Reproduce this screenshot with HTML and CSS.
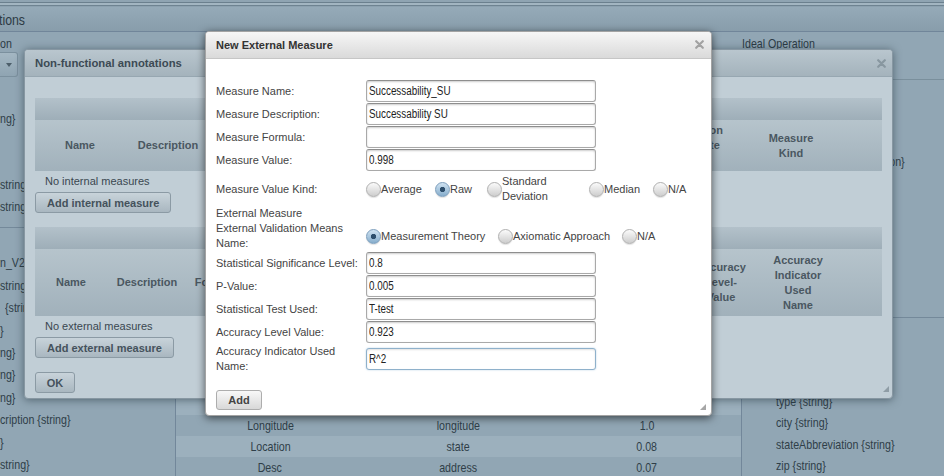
FILE: index.html
```html
<!DOCTYPE html>
<html>
<head>
<meta charset="utf-8">
<title>New External Measure</title>
<link rel="stylesheet" href="styles.css">
</head>
<body>
<div class="page">
  <div class="topstrip"></div>
  <div class="appbar"><span class="cx">tions</span></div>
  <div class="colhead left-head">
    <div class="head-label"><span class="cx">on</span></div>
    <div class="dropdown"><span class="caret"></span></div>
  </div>
  <div class="colhead mid-head"></div>
  <div class="colhead right-head"><div class="head-label"><span class="cx">Ideal Operation</span></div></div>

  <div class="leftcol">
    <ul class="group g1">
      <li></li><li><span class="cx">ng}</span></li><li></li><li></li><li><span class="cx">string}</span></li><li><span class="cx">string}</span></li>
    </ul>
    <ul class="group g2">
      <li></li>
      <li><span class="cx">n_V2</span></li>
      <li><span class="cx">string}</span></li>
      <li class="ind"><span class="cx">{string}</span></li>
      <li><span class="cx">}</span></li>
      <li><span class="cx">ng}</span></li>
      <li><span class="cx">ng}</span></li>
      <li><span class="cx">ng}</span></li>
      <li><span class="cx">cription {string}</span></li>
      <li><span class="cx">}</span></li>
      <li><span class="cx">string}</span></li>
    </ul>
  </div>

  <div class="midcol">
    <div class="trow"></div><div class="trow"></div><div class="trow"></div><div class="trow"></div>
    <div class="trow"></div><div class="trow"></div><div class="trow"></div><div class="trow"></div>
    <div class="trow"></div><div class="trow"></div><div class="trow"></div><div class="trow"></div>
    <div class="trow"></div><div class="trow"></div><div class="trow"></div>
    <div class="trow"><span class="cc">Longitude</span><span class="cc">longitude</span><span class="cc">1.0</span></div>
    <div class="trow"><span class="cc">Location</span><span class="cc">state</span><span class="cc">0.08</span></div>
    <div class="trow"><span class="cc">Desc</span><span class="cc">address</span><span class="cc">0.07</span></div>
  </div>

  <div class="rightcol">
    <ul class="group g1">
      <li></li><li></li><li></li><li><span class="cx">geoLocation {GeoLocation}</span></li><li></li><li></li><li></li><li></li><li></li><li></li>
    </ul>
    <ul class="group g2">
      <li></li><li></li><li></li>
      <li><span class="cx">type {string}</span></li>
      <li><span class="cx">city {string}</span></li>
      <li><span class="cx">stateAbbreviation {string}</span></li>
      <li><span class="cx">zip {string}</span></li>
    </ul>
  </div>
</div>

<div class="dialog dlg1">
  <div class="titlebar">
    <span class="title">Non-functional annotations</span>
    <svg class="close" width="9" height="9" viewBox="0 0 9 9"><path d="M1.2 1.2L7.8 7.8M7.8 1.2L1.2 7.8" stroke="#8897a0" stroke-width="2.2" stroke-linecap="round"/></svg>
  </div>
  <div class="dbody">
    <div class="mtable t1">
      <div class="band"></div>
      <div class="thead">
        <div>Name</div>
        <div>Description</div>
        <div></div>
        <div>Validation Attribute Value</div>
        <div></div>
        <div>Measure Kind</div>
        <div></div>
      </div>
    </div>
    <p class="empty">No internal measures</p>
    <button class="btn" type="button">Add internal measure</button>
    <div class="mtable t2">
      <div class="band"></div>
      <div class="thead">
        <div>Name</div>
        <div>Description</div>
        <div>Formula</div>
        <div></div>
        <div>Accuracy Level-Value</div>
        <div></div>
        <div>Accuracy Indicator Used Name</div>
        <div></div>
      </div>
    </div>
    <p class="empty">No external measures</p>
    <button class="btn" type="button">Add external measure</button>
    <button class="btn ok" type="button">OK</button>
  </div>
  <svg class="grip" width="6" height="6" viewBox="0 0 6 6"><path d="M6 0V6H0Z" fill="#8f9da6"/></svg>
</div>

<div class="dialog dlg2">
  <div class="titlebar">
    <span class="title">New External Measure</span>
    <svg class="close" width="9" height="9" viewBox="0 0 9 9"><path d="M1.2 1.2L7.8 7.8M7.8 1.2L1.2 7.8" stroke="#a2a2a2" stroke-width="2.2" stroke-linecap="round"/></svg>
  </div>
  <form class="dbody form">
    <div class="frow"><label>Measure Name:</label><div class="field"><span class="val">Successability_SU</span></div></div>
    <div class="frow"><label>Measure Description:</label><div class="field"><span class="val">Successability SU</span></div></div>
    <div class="frow"><label>Measure Formula:</label><div class="field"></div></div>
    <div class="frow"><label>Measure Value:</label><div class="field"><span class="val">0.998</span></div></div>
    <div class="frow kind">
      <label>Measure Value Kind:</label>
      <div class="radios kindopts">
        <label class="opt"><input type="radio" name="kind">Average</label>
        <label class="opt"><input type="radio" name="kind" checked>Raw</label>
        <label class="opt"><input type="radio" name="kind">Standard Deviation</label>
        <label class="opt"><input type="radio" name="kind">Median</label>
        <label class="opt"><input type="radio" name="kind">N/A</label>
      </div>
    </div>
    <div class="frow section"><label>External Measure</label></div>
    <div class="frow means">
      <label>External Validation Means Name:</label>
      <div class="radios meansopts">
        <label class="opt"><input type="radio" name="means" checked>Measurement Theory</label>
        <label class="opt"><input type="radio" name="means">Axiomatic Approach</label>
        <label class="opt"><input type="radio" name="means">N/A</label>
      </div>
    </div>
    <div class="frow"><label>Statistical Significance Level:</label><div class="field"><span class="val">0.8</span></div></div>
    <div class="frow"><label>P-Value:</label><div class="field"><span class="val">0.005</span></div></div>
    <div class="frow"><label>Statistical Test Used:</label><div class="field"><span class="val">T-test</span></div></div>
    <div class="frow"><label>Accuracy Level Value:</label><div class="field"><span class="val">0.923</span></div></div>
    <div class="frow tall"><label>Accuracy Indicator Used Name:</label><div class="field focus"><span class="val">R^2</span></div></div>
    <button class="btn2" type="button">Add</button>
  </form>
  <svg class="grip" width="6" height="6" viewBox="0 0 6 6"><path d="M6 0V6H0Z" fill="#a6a6a6"/></svg>
</div>
</body>
</html>
```

FILE: styles.css
```css
* { box-sizing: border-box; }
html, body { margin: 0; padding: 0; }
body {
  width: 944px;
  height: 476px;
  overflow: hidden;
  position: relative;
  background: #91a6b4;
  font-family: "Liberation Sans", Arial, sans-serif;
  color: #2f3e48;
}

/* condensed text (narrow face emulation) */
.cx, .cc, .val {
  display: inline-block;
  white-space: nowrap;
  transform: scaleX(.82);
  transform-origin: left center;
}
.cc { transform-origin: center center; }

/* ---------- background page ---------- */
.page {
  display: grid;
  grid-template-columns: 175px 566px 203px;
  grid-template-rows: 7px 25px 48px 396px;
}
.topstrip {
  grid-column: 1 / -1;
  background: linear-gradient(#8fa4b2 0 2px, #6b808e 2px 3px, #a2b5c1 3px 5px, #6e8391 5px 6px, #8ca1af 6px);
}
.appbar {
  grid-column: 1 / -1;
  border-bottom: 1px solid #71869a;
  background: linear-gradient(#95aab8, #889dab);
  font-size: 15px;
  line-height: 25px;
  color: #2c3a44;
  margin-left: -1px;
  overflow: hidden;
  white-space: nowrap;
}
.colhead { padding-top: 5px; }
.head-label { font-size: 13px; line-height: 14px; white-space: nowrap; color: #2c3b45; }
.right-head { border-bottom: 1px solid #7a8f9c; padding-left: 1px; }
.dropdown {
  margin-top: 1px;
  width: 18px;
  height: 25px;
  border: 1px solid #7b909e;
  border-left: 0;
  border-radius: 0 3px 3px 0;
  background: linear-gradient(#a4b7c3, #8fa4b2);
  display: flex;
  align-items: center;
  justify-content: center;
}
.caret {
  width: 0; height: 0;
  border-left: 3.5px solid transparent;
  border-right: 3.5px solid transparent;
  border-top: 4px solid #4d5e6a;
}

.group { list-style: none; margin: 0; padding: 0; }
.group li { white-space: nowrap; overflow: hidden; font-size: 13px; }

.leftcol { overflow: hidden; }
.leftcol .g1 { padding: 6px 0 9px; border-bottom: 1px solid #74899a; }
.leftcol .g1 li { height: 22px; line-height: 22px; }
.leftcol .g2 { padding-top: 2px; }
.leftcol .g2 li { height: 22.4px; line-height: 22.4px; }
.leftcol li.ind { padding-left: 5px; }

.midcol { border-left: 1px solid #72879a; padding-top: 20px; overflow: hidden; }
.trow {
  display: grid;
  grid-template-columns: repeat(3, 1fr);
  justify-items: center;
  height: 21px;
  line-height: 21px;
  font-size: 13px;
}
.trow:nth-child(odd) { background: #9cb0bd; }

.rightcol { border-left: 1px solid #72879a; overflow: hidden; }
.rightcol .g1 { height: 238px; padding-top: 7px; border-bottom: 1px solid #74899a; overflow: hidden; }
.rightcol .g2 { padding-top: 9px; }
.rightcol li { height: 21.33px; line-height: 21.33px; padding-left: 34px; }

/* ---------- dialogs ---------- */
.dialog {
  position: absolute;
  display: flex;
  flex-direction: column;
  border-radius: 4px;
}
.titlebar {
  flex: none;
  height: 27px;
  display: flex;
  align-items: center;
  justify-content: space-between;
  border-radius: 3px 3px 0 0;
}
.title { font-size: 11px; font-weight: bold; }
.grip { position: absolute; }

.dlg1 {
  left: 24px; top: 49px; width: 869px; height: 350px;
  background: #c1ced6;
  border: 1px solid #8797a2;
  box-shadow: 0 1px 8px rgba(30, 45, 55, .55);
}
.dlg1 .titlebar {
  background: linear-gradient(#b9c6ce, #a4b3bc);
  border-bottom: 1px solid #97a7b1;
  padding: 0 6px 0 10px;
}
.dlg1 .title { color: #3c4a54; font-size: 11.3px; }
.dlg1 .dbody { padding: 21px 10px 0; }
.dlg1 .grip { right: 3px; bottom: 6px; }

.band { height: 22px; background: linear-gradient(#b3c1ca, #9eaeb8); }
.thead {
  display: grid;
  align-items: center;
  text-align: center;
  background: linear-gradient(#b6c4cc, #a1b1bb);
  font-size: 11px;
  font-weight: bold;
  line-height: 15px;
  color: #4a5761;
}
.t1 .thead { height: 51px; grid-template-columns: 90px 86px 454px 64px 31px 62px 61px; }
.t2 { margin-top: 14px; }
.t2 .thead { height: 67px; grid-template-columns: 72px 80px 59px 447px 56px 21px 56px 57px; }

.empty { margin: 3px 0 0 10px; font-size: 11px; line-height: 14px; color: #3a4750; }
.btn {
  display: block;
  margin-top: 4px;
  height: 21px;
  padding: 0 11px;
  font: bold 11px "Liberation Sans", Arial, sans-serif;
  color: #45525c;
  border: 1px solid #8b9aa4;
  border-radius: 3px;
  background: linear-gradient(#c8d3da, #a9b7c0);
}
.btn.ok { margin-top: 14px; width: 40px; padding: 0; }

.dlg2 {
  left: 205px; top: 31px; width: 507px; height: 385px;
  background: #fff;
  border: 1px solid #a3a3a3;
  box-shadow: 0 2px 9px rgba(0, 0, 0, .6);
}
.dlg2 .titlebar {
  background: linear-gradient(#f6f6f6, #dadada);
  border-bottom: 1px solid #c6c6c6;
  padding: 0 7px 1px 10px;
}
.dlg2 .title { color: #333; }
.dlg2 .grip { right: 5px; bottom: 5px; }

.form { margin: 0; padding: 21px 10px 0; }
.frow {
  display: grid;
  grid-template-columns: 150px 230px;
  align-items: center;
  height: 22px;
  margin-bottom: 1px;
}
.frow > label { font-size: 11px; line-height: 15px; color: #444; }
.frow.kind { height: 34px; margin-bottom: 0; grid-template-columns: 150px 1fr; }
.frow.section { height: 15px; margin-bottom: 0; }
.frow.means { height: 30px; grid-template-columns: 150px 1fr; }
.frow.tall { height: 30px; margin-bottom: 0; }
.field {
  display: flex;
  align-items: center;
  width: 230px;
  height: 22px;
  padding: 0 2px;
  border: 1px solid #a9a9a9;
  border-top-color: #8e8e8e;
  border-radius: 3px;
  box-shadow: inset 0 1px 2px rgba(0, 0, 0, .2);
  background: #fff;
  font-size: 12px;
  color: #222;
  overflow: hidden;
}
.field.focus { border-color: #8fb1cb; box-shadow: inset 0 1px 2px rgba(0, 0, 0, .12), 0 0 2px #b7d1e5; }

.radios { display: grid; align-items: center; }
.kindopts { grid-template-columns: 69px 52px 102px 64px 1fr; }
.meansopts { grid-template-columns: 132px 124px 1fr; }
.opt { display: flex; align-items: center; font-size: 11px; line-height: 15px; color: #444; }
.opt input {
  -webkit-appearance: none;
  appearance: none;
  flex: none;
  margin: 0;
  width: 15px;
  height: 15px;
  border-radius: 50%;
  border: 1px solid #b0b0b0;
  background: linear-gradient(#fbfbfb, #cdcdcd);
  box-shadow: 0 1px 1px rgba(0, 0, 0, .12);
}
.opt input:checked {
  border-color: #7d9fbd;
  background: radial-gradient(circle, #2d4e6c 0 2.3px, rgba(45, 78, 108, 0) 3px), linear-gradient(#d0e3f2, #86adcc);
}

.btn2 {
  display: block;
  margin-top: 16px;
  width: 46px;
  height: 20px;
  padding: 0;
  font: bold 11px "Liberation Sans", Arial, sans-serif;
  color: #444;
  border: 1px solid #adadad;
  border-radius: 3px;
  background: linear-gradient(#f8f8f8, #d8d8d8);
}
```
